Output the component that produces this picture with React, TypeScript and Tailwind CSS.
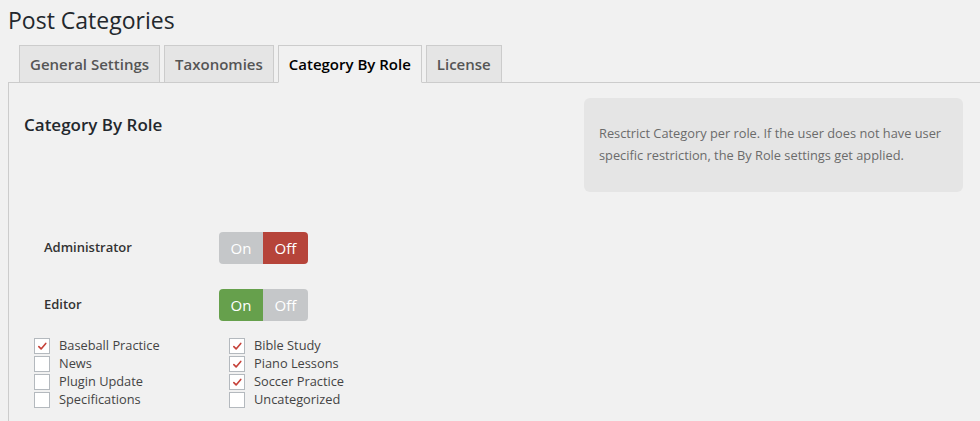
const tabs = ['General Settings', 'Taxonomies', 'Category By Role', 'License']

const roles = [
  { name: 'Administrator', on: false },
  { name: 'Editor', on: true },
]

const categories = [
  [
    { label: 'Baseball Practice', checked: true },
    { label: 'News', checked: false },
    { label: 'Plugin Update', checked: false },
    { label: 'Specifications', checked: false },
  ],
  [
    { label: 'Bible Study', checked: true },
    { label: 'Piano Lessons', checked: true },
    { label: 'Soccer Practice', checked: true },
    { label: 'Uncategorized', checked: false },
  ],
]

function Toggle({ on }: { on: boolean }) {
  return (
    <div className="flex h-[32px] w-[89px] overflow-hidden rounded-[4px] text-[15px] text-white">
      <span className={`flex w-[44px] items-center justify-center ${on ? 'bg-[#66a04c]' : 'bg-[#c5c7c9]'}`}>On</span>
      <span className={`flex flex-1 items-center justify-center ${on ? 'bg-[#c5c7c9]' : 'bg-[#b6443a]'}`}>Off</span>
    </div>
  )
}

function Checkbox({ checked }: { checked: boolean }) {
  return (
    <span className="flex h-[16px] w-[16px] shrink-0 items-center justify-center border border-[#b4b9be] bg-white">
      {checked && (
        <svg viewBox="0 0 16 16" className="h-[13px] w-[13px]">
          <path d="M3.5 8.2l2.8 2.8 5.7-6.8" fill="none" stroke="#c6423a" strokeWidth="2" strokeLinecap="round" strokeLinejoin="round" />
        </svg>
      )}
    </span>
  )
}

export default function App() {
  return (
    <div className="h-[421px] w-[980px] overflow-hidden bg-[#f1f1f1] pl-2 font-['Open_Sans',sans-serif] text-[#23282d]">
      {/* Title */}
      <h1 className="pt-[3px] text-[23px] leading-[34px] text-[#23282d]">Post Categories</h1>

      {/* Tabs */}
      <div className="mt-[8px] flex items-end gap-[4px] pl-[11px]">
        {tabs.map((t) => {
          const active = t === 'Category By Role'
          return (
            <div
              key={t}
              className={`relative -mb-px flex h-[38px] items-center border border-[#ccc] px-[10px] text-[15px] font-semibold ${
                active ? 'z-10 border-b-[#f1f1f1] bg-[#f1f1f1] text-black' : 'bg-[#e5e5e5] text-[#555]'
              }`}
            >
              {t}
            </div>
          )
        })}
      </div>

      {/* Panel */}
      <div className="h-[400px] border-l border-t border-[#ccc] pl-[15px]">
        <div className="flex items-start justify-between pr-[17px] pt-[15px]">
          <h2 className="pt-[15px] text-[17px] font-semibold leading-[24px] text-[#23282d]">Category By Role</h2>
          <div className="h-[94px] w-[379px] rounded-[6px] bg-[#e5e5e5] px-[15px] pt-[24px] text-[12.8px] leading-[22px] text-[#6b6b6b]">
            Resctrict Category per role. If the user does not have user specific restriction, the By Role settings get applied.
          </div>
        </div>

        {/* Roles */}
        <div className="mt-[40px] flex flex-col gap-[25px] pl-[20px]">
          {roles.map((r) => (
            <div key={r.name} className="flex items-center">
              <span className="w-[175px] text-[13px] font-semibold text-[#333]">{r.name}</span>
              <Toggle on={r.on} />
            </div>
          ))}
        </div>

        {/* Categories */}
        <div className="mt-[17px] flex pl-[10px]">
          {categories.map((col, i) => (
            <div key={i} className="flex w-[195px] flex-col gap-[2px]">
              {col.map((c) => (
                <label key={c.label} className="flex h-[16px] items-center gap-[9px] text-[12.8px] text-[#444]">
                  <Checkbox checked={c.checked} />
                  {c.label}
                </label>
              ))}
            </div>
          ))}
        </div>
      </div>
    </div>
  )
}
